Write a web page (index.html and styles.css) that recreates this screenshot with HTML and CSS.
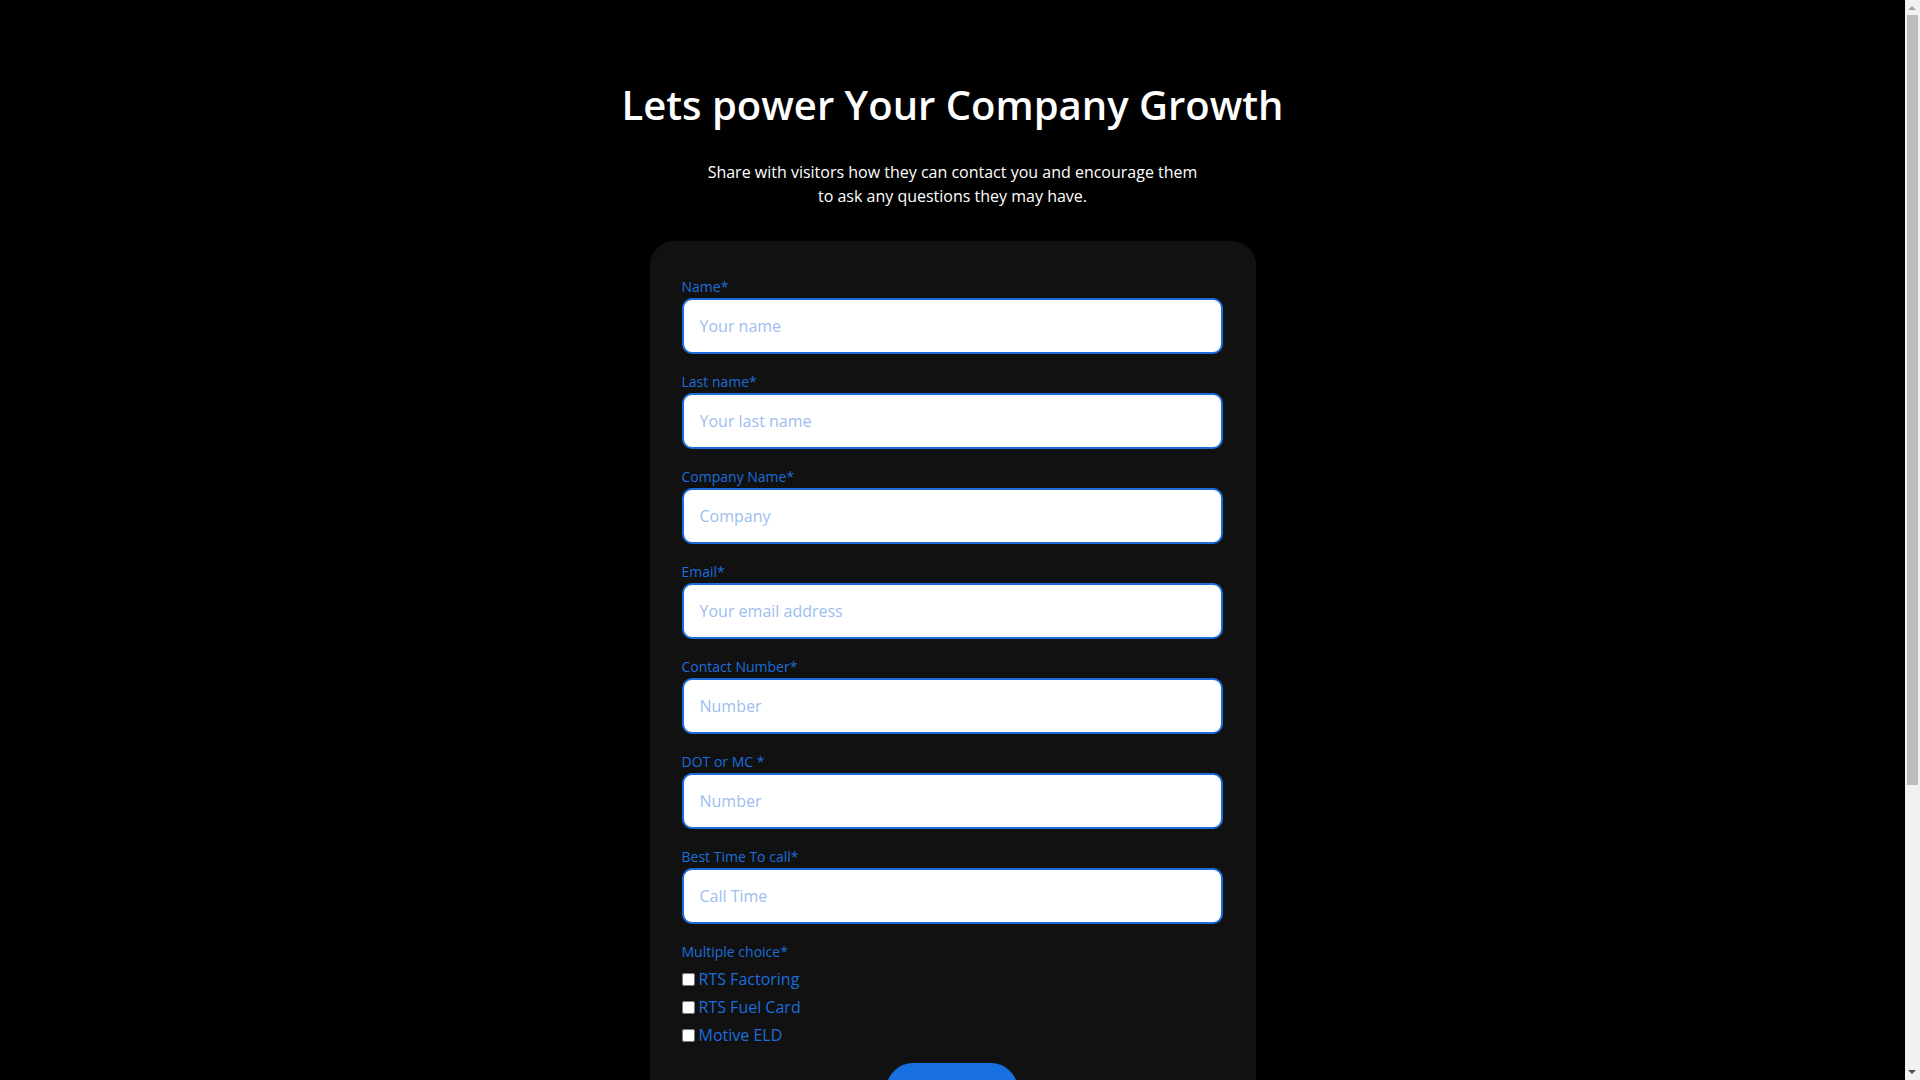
FILE: index.html
```html
<!DOCTYPE html>
<html lang="en">
<head>
<meta charset="utf-8">
<title>Lets power Your Company Growth</title>
<link rel="stylesheet" href="styles.css">
</head>
<body>
<main class="page">
  <h1 class="title">Lets power Your Company Growth</h1>
  <p class="subtitle">Share with visitors how they can contact you and encourage them<br>to ask any questions they may have.</p>
  <form class="card">
    <div class="field">
      <label class="label" for="name">Name*</label>
      <input class="input" id="name" type="text" placeholder="Your name">
    </div>
    <div class="field">
      <label class="label" for="last">Last name*</label>
      <input class="input" id="last" type="text" placeholder="Your last name">
    </div>
    <div class="field">
      <label class="label" for="company">Company Name*</label>
      <input class="input" id="company" type="text" placeholder="Company">
    </div>
    <div class="field">
      <label class="label" for="email">Email*</label>
      <input class="input" id="email" type="email" placeholder="Your email address">
    </div>
    <div class="field">
      <label class="label" for="phone">Contact Number*</label>
      <input class="input" id="phone" type="text" placeholder="Number">
    </div>
    <div class="field">
      <label class="label" for="dot">DOT or MC *</label>
      <input class="input" id="dot" type="text" placeholder="Number">
    </div>
    <div class="field">
      <label class="label" for="time">Best Time To call*</label>
      <input class="input" id="time" type="text" placeholder="Call Time">
    </div>
    <div class="choices">
      <span class="label">Multiple choice*</span>
      <label class="choice"><input class="check" type="checkbox">RTS Factoring</label>
      <label class="choice"><input class="check" type="checkbox">RTS Fuel Card</label>
      <label class="choice"><input class="check" type="checkbox">Motive ELD</label>
    </div>
    <div class="actions">
      <button class="submit" type="button">Submit</button>
    </div>
  </form>
</main>
<div class="scrollbar" aria-hidden="true">
  <span class="arrow arrow-up"></span>
  <span class="thumb"></span>
  <span class="arrow arrow-down"></span>
</div>
</body>
</html>
```
FILE: styles.css
```css
html, body {
  margin: 0;
  padding: 0;
  background: #000;
}
body {
  font-family: "Open Sans", "Noto Sans", sans-serif;
  color: #fff;
  overflow-x: hidden;
}
.page {
  display: flex;
  flex-direction: column;
  align-items: center;
  padding: 78px 15px 320px 0;
}
.title {
  margin: 0;
  font-size: 40px;
  line-height: 54px;
  font-weight: 600;
  color: #fff;
}
.subtitle {
  margin: 28px 0 0;
  font-size: 16px;
  line-height: 24px;
  text-align: center;
  color: #fff;
}
.card {
  margin-top: 33px;
  width: 606px;
  box-sizing: border-box;
  background: #111;
  border-radius: 24px;
  padding: 36px 33px 32px 32px;
  display: flex;
  flex-direction: column;
  gap: 18px;
}
.field {
  display: flex;
  flex-direction: column;
  gap: 1px;
}
.label {
  font-size: 14px;
  line-height: 20px;
  color: #1c6ddb;
}
.input {
  box-sizing: border-box;
  width: 100%;
  height: 56px;
  margin: 0;
  padding: 0 16px;
  border: 2px solid #1c6ddb;
  border-radius: 10px;
  background: #fff;
  font-family: "Open Sans", "Noto Sans", sans-serif;
  font-size: 16px;
  color: #222;
  outline: none;
}
.input::placeholder {
  color: #9dbdf0;
  opacity: 1;
}
.choices {
  display: flex;
  flex-direction: column;
}
.choices .label {
  margin-bottom: 3px;
}
.choice {
  display: flex;
  align-items: center;
  height: 28px;
  font-size: 16px;
  color: #1c6ddb;
}
.check {
  width: 13px;
  height: 13px;
  margin: 0 4px 0 0;
}
.actions {
  display: flex;
  justify-content: center;
  margin-top: -4px;
}
.submit {
  width: 132px;
  height: 54px;
  border: none;
  border-radius: 27px;
  background: #176fe0;
  color: #fff;
  font-family: "Open Sans", "Noto Sans", sans-serif;
  font-size: 18px;
  font-weight: 600;
}
.scrollbar {
  position: fixed;
  top: 0;
  right: 0;
  width: 15px;
  height: 100vh;
  background: #f1f1f1;
}
.arrow {
  position: absolute;
  left: 3px;
  width: 0;
  height: 0;
  border-left: 4px solid transparent;
  border-right: 4px solid transparent;
}
.arrow-up {
  top: 6px;
  border-bottom: 4px solid #a3a3a3;
}
.arrow-down {
  bottom: 6px;
  border-top: 4px solid #505050;
}
.thumb {
  position: absolute;
  top: 15px;
  left: 2px;
  width: 11px;
  height: 770px;
  background: #bdbdbd;
}
```
